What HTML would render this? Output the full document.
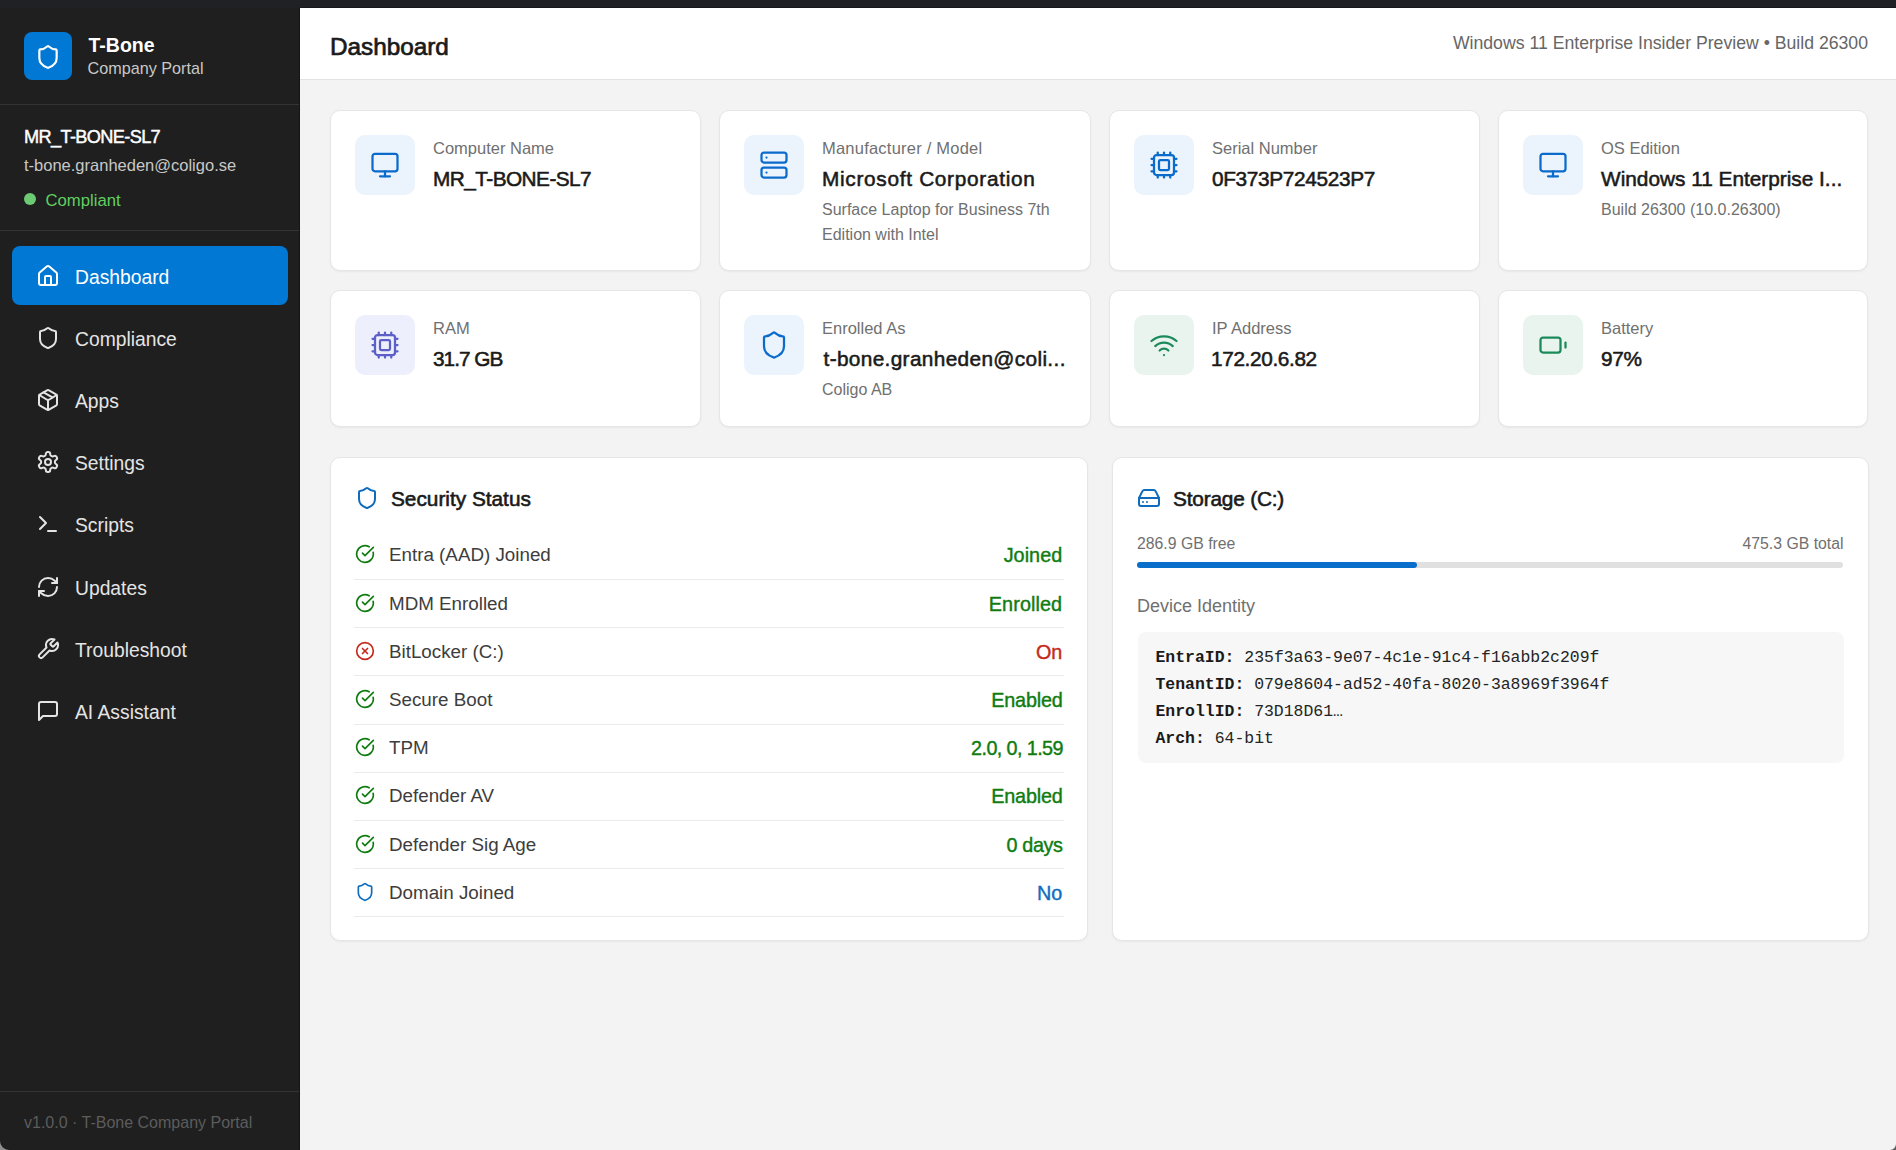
<!DOCTYPE html>
<html><head><meta charset="utf-8">
<style>
*{box-sizing:border-box;margin:0;padding:0}
html,body{width:1896px;height:1150px;overflow:hidden;background:#f3f3f3;font-family:"Liberation Sans",sans-serif}
.abs{position:absolute}
svg{display:block;fill:none;stroke:currentColor;stroke-linecap:round;stroke-linejoin:round}
#topbar{left:0;top:0;width:1896px;height:8px;background:#202124}
#side{left:0;top:8px;width:300px;height:1142px;background:#1f1f1f;border-right:1px solid #151515}
.div{position:absolute;left:0;width:299px;height:1px;background:#343434}
.logo{left:24px;top:24px;width:48px;height:48px;border-radius:8px;background:#0078d4}
.t1{color:#fff;-webkit-text-stroke-width:0.45px;white-space:nowrap}
.t2{color:#c8c8c8;white-space:nowrap}
.nav{position:absolute;left:12px;width:276px;height:59px;border-radius:8px;color:#e4e4e4}
.nav.act{background:#0078d4;color:#fff}
.nav svg{position:absolute;left:24px;top:17.5px;width:24px;height:24px;stroke-width:2}
.nav span{position:absolute;left:63px;top:1.6px;line-height:59px;font-size:19.3px;white-space:nowrap}
#main{left:300px;top:8px;width:1596px;height:1142px}
#hdr{left:0;top:0;width:1596px;height:72px;background:#fff;border-bottom:1px solid #e3e3e3}
.card{position:absolute;background:#fff;border:1px solid #e6e6e6;border-radius:10px;box-shadow:0 1px 2px rgba(0,0,0,0.05)}
.ib{position:absolute;left:24px;top:24px;width:60px;height:60px;border-radius:10px}
.ib svg{position:absolute;left:15px;top:15px;width:30px;height:30px;stroke-width:1.8}
.blue{background:#ebf3fc;color:#0b6bcb}
.purp{background:#eeeffc;color:#5b5fc7}
.grn{background:#e9f4ef;color:#1b8a5a}
.lbl{position:absolute;left:102px;color:#707070;white-space:nowrap;font-size:16.5px;line-height:24px}
.val{position:absolute;left:102px;color:#1a1a1a;-webkit-text-stroke-width:0.55px;white-space:nowrap;font-size:20.8px;line-height:24px}
.sub{position:absolute;left:102px;color:#707070;font-size:16px;line-height:25px;white-space:nowrap}
.ptitle{position:absolute;font-size:20.8px;line-height:24px;-webkit-text-stroke-width:0.6px;color:#1a1a1a;white-space:nowrap}
.rlab{position:absolute;font-size:18.8px;line-height:24px;color:#3d3d3d;white-space:nowrap}
.rval{position:absolute;font-size:19.8px;line-height:24px;-webkit-text-stroke-width:0.4px;white-space:nowrap}
.rval.g{color:#107c10}.rval.r{color:#c42b1c}.rval.b{color:#0f6cbd}
.sm{position:absolute;font-size:15.8px;line-height:24px;color:#707070;white-space:nowrap}
.di{position:absolute;font-size:18px;line-height:24px;color:#707070;white-space:nowrap}
.code{background:#f7f7f7;border-radius:8px}
.cl{position:absolute;left:18px;font-family:"Liberation Mono",monospace;font-size:16.45px;line-height:27px;color:#242424;white-space:nowrap}
.cl b{font-weight:bold;color:#1a1a1a}
</style></head><body>
<div id="topbar" class="abs"></div>
<div id="side" class="abs">
  <div class="logo abs">
    <svg class="abs" style="left:11px;top:11.5px;width:26px;height:26px;color:#fff;stroke-width:2" viewBox="0 0 24 24"><path d="M20 13c0 5-3.5 7.5-7.66 8.95a1 1 0 0 1-.67-.01C7.5 20.5 4 18 4 13V6a1 1 0 0 1 1-1c2 0 4.5-1.2 6.24-2.72a1.17 1.17 0 0 1 1.52 0C14.51 3.81 17 5 19 5a1 1 0 0 1 1 1z"/></svg>
  </div>
  <div class="abs t1" style="left:88.5px;top:23px;font-size:19.5px;line-height:28px;font-weight:bold;-webkit-text-stroke-width:0">T-Bone</div>
  <div class="abs t2" style="left:87.5px;top:48.3px;font-size:16.2px;line-height:24px">Company Portal</div>
  <div class="div" style="top:96px"></div>
  <div class="abs t1" style="left:24px;top:117px;font-size:18.2px;line-height:24px;letter-spacing:-0.65px">MR_T-BONE-SL7</div>
  <div class="abs t2" style="left:24px;top:144.5px;font-size:16.5px;line-height:24px">t-bone.granheden@coligo.se</div>
  <div class="abs" style="left:24px;top:185px;width:12px;height:12px;border-radius:6px;background:#6ccb72"></div>
  <div class="abs" style="left:45.5px;top:181px;font-size:16.7px;line-height:24px;color:#5fcf5f">Compliant</div>
  <div class="div" style="top:222px"></div>

  <div class="nav act" style="top:238px"><svg viewBox="0 0 24 24"><path d="M15 21v-8a1 1 0 0 0-1-1h-4a1 1 0 0 0-1 1v8"/><path d="M3 10a2 2 0 0 1 .709-1.528l7-5.999a2 2 0 0 1 2.582 0l7 5.999A2 2 0 0 1 21 10v9a2 2 0 0 1-2 2H5a2 2 0 0 1-2-2z"/></svg><span>Dashboard</span></div>
  <div class="nav" style="top:300.2px"><svg viewBox="0 0 24 24"><path d="M20 13c0 5-3.5 7.5-7.66 8.950a1 1 0 0 1-.67-.01C7.5 20.5 4 18 4 13V6a1 1 0 0 1 1-1c2 0 4.5-1.2 6.24-2.72a1.17 1.17 0 0 1 1.52 0C14.51 3.81 17 5 19 5a1 1 0 0 1 1 1z"/></svg><span>Compliance</span></div>
  <div class="nav" style="top:362.4px"><svg viewBox="0 0 24 24"><path d="M11 21.73a2 2 0 0 0 2 0l7-4A2 2 0 0 0 21 16V8a2 2 0 0 0-1-1.730l-7-4a2 2 0 0 0-2 0l-7 4A2 2 0 0 0 3 8v8a2 2 0 0 0 1 1.73z"/><path d="M12 22V12"/><path d="m3.3 7 7.703 4.734a2 2 0 0 0 1.994 0L20.7 7"/><path d="m7.5 4.27 9 5.15"/></svg><span>Apps</span></div>
  <div class="nav" style="top:424.6px"><svg viewBox="0 0 24 24"><path d="M12.22 2h-.44a2 2 0 0 0-2 2v.18a2 2 0 0 1-1 1.73l-.43.25a2 2 0 0 1-2 0l-.15-.08a2 2 0 0 0-2.73.73l-.22.38a2 2 0 0 0 .73 2.730l.15.1a2 2 0 0 1 1 1.72v.51a2 2 0 0 1-1 1.74l-.15.09a2 2 0 0 0-.73 2.73l.22.38a2 2 0 0 0 2.73.73l.15-.08a2 2 0 0 1 2 0l.43.25a2 2 0 0 1 1 1.73V20a2 2 0 0 0 2 2h.44a2 2 0 0 0 2-2v-.18a2 2 0 0 1 1-1.73l.43-.25a2 2 0 0 1 2 0l.15.08a2 2 0 0 0 2.73-.73l.22-.39a2 2 0 0 0-.73-2.73l-.15-.08a2 2 0 0 1-1-1.74v-.5a2 2 0 0 1 1-1.74l.15-.09a2 2 0 0 0 .73-2.73l-.22-.38a2 2 0 0 0-2.73-.73l-.15.08a2 2 0 0 1-2 0l-.43-.25a2 2 0 0 1-1-1.73V4a2 2 0 0 0-2-2z"/><circle cx="12" cy="12" r="3"/></svg><span>Settings</span></div>
  <div class="nav" style="top:486.8px"><svg viewBox="0 0 24 24"><polyline points="4 17 10 11 4 5"/><line x1="12" x2="20" y1="19" y2="19"/></svg><span>Scripts</span></div>
  <div class="nav" style="top:549.0px"><svg viewBox="0 0 24 24"><path d="M3 12a9 9 0 0 1 9-9 9.75 9.75 0 0 1 6.74 2.74L21 8"/><path d="M21 3v5h-5"/><path d="M21 12a9 9 0 0 1-9 9 9.75 9.75 0 0 1-6.74-2.74L3 16"/><path d="M8 16H3v5"/></svg><span>Updates</span></div>
  <div class="nav" style="top:611.2px"><svg viewBox="0 0 24 24"><path d="M14.7 6.3a1 1 0 0 0 0 1.4l1.6 1.6a1 1 0 0 0 1.4 0l3.77-3.77a6 6 0 0 1-7.94 7.94l-6.91 6.91a2.12 2.12 0 0 1-3-3l6.91-6.91a6 6 0 0 1 7.940-7.94l-3.76 3.76z"/></svg><span>Troubleshoot</span></div>
  <div class="nav" style="top:673.4px"><svg viewBox="0 0 24 24"><path d="M21 15a2 2 0 0 1-2 2H7l-4 4V5a2 2 0 0 1 2-2h14a2 2 0 0 1 2 2z"/></svg><span>AI Assistant</span></div>

  <div class="div" style="top:1083px"></div>
  <div class="abs" style="left:24px;top:1103.3px;font-size:16px;line-height:24px;color:#5c5c5c;white-space:nowrap">v1.0.0 · T-Bone Company Portal</div>
</div>

<div id="main" class="abs">
  <div id="hdr" class="abs">
    <div class="abs" style="left:30px;top:20.5px;font-size:24.3px;line-height:36px;color:#1a1a1a;-webkit-text-stroke-width:0.7px">Dashboard</div>
    <div class="abs" style="right:28px;top:23px;font-size:17.66px;line-height:24px;color:#666;white-space:nowrap">Windows 11 Enterprise Insider Preview • Build 26300</div>
  </div>
</div>
<!--CARDS-->
<div class="card" style="left:330px;top:110px;width:371px;height:161px"><div class="ib blue"><svg viewBox="0 0 24 24"><rect width="20" height="14" x="2" y="3" rx="2"/><line x1="8" x2="16" y1="21" y2="21"/><line x1="12" x2="12" y1="17" y2="21"/></svg></div><div class="lbl" style="top:24.5px;letter-spacing:0px">Computer Name</div><div class="val" style="top:56px;left:102px;letter-spacing:-0.55px">MR_T-BONE-SL7</div></div>
<div class="card" style="left:719px;top:110px;width:372px;height:161px"><div class="ib blue"><svg viewBox="0 0 24 24"><rect width="20" height="8" x="2" y="2" rx="2" ry="2"/><rect width="20" height="8" x="2" y="14" rx="2" ry="2"/><line x1="6" x2="6.01" y1="6" y2="6"/><line x1="6" x2="6.01" y1="18" y2="18"/></svg></div><div class="lbl" style="top:24.5px;letter-spacing:0.22px">Manufacturer / Model</div><div class="val" style="top:56px;left:102px;letter-spacing:0.7px">Microsoft Corporation</div><div class="sub" style="top:86px">Surface Laptop for Business 7th<br>Edition with Intel</div></div>
<div class="card" style="left:1109px;top:110px;width:371px;height:161px"><div class="ib blue"><svg viewBox="0 0 24 24"><path d="M12 20v2"/><path d="M12 2v2"/><path d="M17 20v2"/><path d="M17 2v2"/><path d="M2 12h2"/><path d="M2 17h2"/><path d="M2 7h2"/><path d="M20 12h2"/><path d="M20 17h2"/><path d="M20 7h2"/><path d="M7 20v2"/><path d="M7 2v2"/><rect x="4" y="4" width="16" height="16" rx="2"/><rect x="8" y="8" width="8" height="8" rx="1"/></svg></div><div class="lbl" style="top:24.5px;letter-spacing:0px">Serial Number</div><div class="val" style="top:56px;left:102px;letter-spacing:-0.34px">0F373P724523P7</div></div>
<div class="card" style="left:1498px;top:110px;width:370px;height:161px"><div class="ib blue"><svg viewBox="0 0 24 24"><rect width="20" height="14" x="2" y="3" rx="2"/><line x1="8" x2="16" y1="21" y2="21"/><line x1="12" x2="12" y1="17" y2="21"/></svg></div><div class="lbl" style="top:24.5px;letter-spacing:0px">OS Edition</div><div class="val" style="top:56px;left:102px;letter-spacing:0px">Windows 11 Enterprise I...</div><div class="sub" style="top:86px">Build 26300 (10.0.26300)</div></div>
<div class="card" style="left:330px;top:290px;width:371px;height:137px"><div class="ib purp"><svg viewBox="0 0 24 24"><path d="M12 20v2"/><path d="M12 2v2"/><path d="M17 20v2"/><path d="M17 2v2"/><path d="M2 12h2"/><path d="M2 17h2"/><path d="M2 7h2"/><path d="M20 12h2"/><path d="M20 17h2"/><path d="M20 7h2"/><path d="M7 20v2"/><path d="M7 2v2"/><rect x="4" y="4" width="16" height="16" rx="2"/><rect x="8" y="8" width="8" height="8" rx="1"/></svg></div><div class="lbl" style="top:24.5px;letter-spacing:0px">RAM</div><div class="val" style="top:56px;left:102px;letter-spacing:-1.0px">31.7 GB</div></div>
<div class="card" style="left:719px;top:290px;width:372px;height:137px"><div class="ib blue"><svg viewBox="0 0 24 24"><path d="M20 13c0 5-3.5 7.5-7.66 8.95a1 1 0 0 1-.67-.01C7.5 20.5 4 18 4 13V6a1 1 0 0 1 1-1c2 0 4.5-1.2 6.24-2.72a1.17 1.17 0 0 1 1.52 0C14.51 3.81 17 5 19 5a1 1 0 0 1 1 1z"/></svg></div><div class="lbl" style="top:24.5px;letter-spacing:0px">Enrolled As</div><div class="val" style="top:56px;left:103.5px;letter-spacing:0.35px">t-bone.granheden@coli...</div><div class="sub" style="top:86px">Coligo AB</div></div>
<div class="card" style="left:1109px;top:290px;width:371px;height:137px"><div class="ib grn"><svg viewBox="0 0 24 24"><path d="M12 20h.01"/><path d="M2 8.82a15 15 0 0 1 20 0"/><path d="M5 12.859a10 10 0 0 1 14 0"/><path d="M8.5 16.429a5 5 0 0 1 7 0"/></svg></div><div class="lbl" style="top:24.5px;letter-spacing:0px">IP Address</div><div class="val" style="top:56px;left:101px;letter-spacing:-0.37px">172.20.6.82</div></div>
<div class="card" style="left:1498px;top:290px;width:370px;height:137px"><div class="ib grn"><svg viewBox="0 0 24 24"><rect width="16" height="12" x="2" y="6" rx="2"/><path d="M22 14v-4"/></svg></div><div class="lbl" style="top:24.5px;letter-spacing:0px">Battery</div><div class="val" style="top:56px;left:102px;letter-spacing:-0.3px">97%</div></div>
<!--/CARDS-->
<!--PANELS-->
<div class="card" style="left:330px;top:457px;width:758px;height:484px"><svg class="abs" style="left:24px;top:28px;width:24px;height:24px;color:#0f6cbd;stroke-width:2" viewBox="0 0 24 24"><path d="M20 13c0 5-3.5 7.5-7.66 8.95a1 1 0 0 1-.67-.01C7.5 20.5 4 18 4 13V6a1 1 0 0 1 1-1c2 0 4.5-1.2 6.24-2.72a1.17 1.17 0 0 1 1.52 0C14.51 3.81 17 5 19 5a1 1 0 0 1 1 1z"/></svg><div class="ptitle" style="left:60px;top:29px">Security Status</div><svg class="abs" style="left:23.8px;top:86.4px;width:20px;height:20px;color:#107c10;stroke-width:2" viewBox="0 0 24 24"><path d="M21.801 10A10 10 0 1 1 17 3.335"/><path d="m9 11 3 3L22 4"/></svg><div class="rlab" style="left:58px;top:85.4px">Entra (AAD) Joined</div><div class="rval g" style="right:24.75px;top:85.4px;letter-spacing:0.05px">Joined</div><div class="abs" style="left:23px;top:121px;width:710px;height:1px;background:#ebebeb"></div><svg class="abs" style="left:23.8px;top:134.6px;width:20px;height:20px;color:#107c10;stroke-width:2" viewBox="0 0 24 24"><path d="M21.801 10A10 10 0 1 1 17 3.335"/><path d="m9 11 3 3L22 4"/></svg><div class="rlab" style="left:58px;top:133.6px">MDM Enrolled</div><div class="rval g" style="right:24.8px;top:133.6px;letter-spacing:0.1px">Enrolled</div><div class="abs" style="left:23px;top:169.2px;width:710px;height:1px;background:#ebebeb"></div><svg class="abs" style="left:23.8px;top:182.8px;width:20px;height:20px;color:#c42b1c;stroke-width:2" viewBox="0 0 24 24"><circle cx="12" cy="12" r="10"/><path d="m15 9-6 6"/><path d="m9 9 6 6"/></svg><div class="rlab" style="left:58px;top:181.8px">BitLocker (C:)</div><div class="rval r" style="right:24.7px;top:181.8px;letter-spacing:0px">On</div><div class="abs" style="left:23px;top:217.4px;width:710px;height:1px;background:#ebebeb"></div><svg class="abs" style="left:23.8px;top:231px;width:20px;height:20px;color:#107c10;stroke-width:2" viewBox="0 0 24 24"><path d="M21.801 10A10 10 0 1 1 17 3.335"/><path d="m9 11 3 3L22 4"/></svg><div class="rlab" style="left:58px;top:230px">Secure Boot</div><div class="rval g" style="right:24.5px;top:230px;letter-spacing:-0.2px">Enabled</div><div class="abs" style="left:23px;top:265.6px;width:710px;height:1px;background:#ebebeb"></div><svg class="abs" style="left:23.8px;top:279.2px;width:20px;height:20px;color:#107c10;stroke-width:2" viewBox="0 0 24 24"><path d="M21.801 10A10 10 0 1 1 17 3.335"/><path d="m9 11 3 3L22 4"/></svg><div class="rlab" style="left:58px;top:278.2px">TPM</div><div class="rval g" style="right:24.1px;top:278.2px;letter-spacing:-0.6px">2.0, 0, 1.59</div><div class="abs" style="left:23px;top:313.8px;width:710px;height:1px;background:#ebebeb"></div><svg class="abs" style="left:23.8px;top:327.4px;width:20px;height:20px;color:#107c10;stroke-width:2" viewBox="0 0 24 24"><path d="M21.801 10A10 10 0 1 1 17 3.335"/><path d="m9 11 3 3L22 4"/></svg><div class="rlab" style="left:58px;top:326.4px">Defender AV</div><div class="rval g" style="right:24.5px;top:326.4px;letter-spacing:-0.2px">Enabled</div><div class="abs" style="left:23px;top:362px;width:710px;height:1px;background:#ebebeb"></div><svg class="abs" style="left:23.8px;top:375.6px;width:20px;height:20px;color:#107c10;stroke-width:2" viewBox="0 0 24 24"><path d="M21.801 10A10 10 0 1 1 17 3.335"/><path d="m9 11 3 3L22 4"/></svg><div class="rlab" style="left:58px;top:374.6px">Defender Sig Age</div><div class="rval g" style="right:24.35px;top:374.6px;letter-spacing:-0.35px">0 days</div><div class="abs" style="left:23px;top:410.2px;width:710px;height:1px;background:#ebebeb"></div><svg class="abs" style="left:23.8px;top:423.8px;width:20px;height:20px;color:#0f6cbd;stroke-width:2" viewBox="0 0 24 24"><path d="M20 13c0 5-3.5 7.5-7.66 8.95a1 1 0 0 1-.67-.01C7.5 20.5 4 18 4 13V6a1 1 0 0 1 1-1c2 0 4.5-1.2 6.24-2.72a1.17 1.17 0 0 1 1.52 0C14.51 3.81 17 5 19 5a1 1 0 0 1 1 1z"/></svg><div class="rlab" style="left:58px;top:422.8px">Domain Joined</div><div class="rval b" style="right:24.7px;top:422.8px;letter-spacing:0px">No</div><div class="abs" style="left:23px;top:458.4px;width:710px;height:1px;background:#ebebeb"></div></div>
<div class="card" style="left:1112px;top:457px;width:757px;height:484px"><svg class="abs" style="left:24px;top:28px;width:24px;height:24px;color:#0f6cbd;stroke-width:2" viewBox="0 0 24 24"><line x1="22" x2="2" y1="12" y2="12"/><path d="M5.45 5.11 2 12v6a2 2 0 0 0 2 2h16a2 2 0 0 0 2-2v-6l-3.45-6.89A2 2 0 0 0 16.76 4H7.24a2 2 0 0 0-1.79 1.11z"/><line x1="6" x2="6.01" y1="16" y2="16"/><line x1="10" x2="10.01" y1="16" y2="16"/></svg><div class="ptitle" style="left:60px;top:29px;letter-spacing:-0.18px">Storage (C:)</div><div class="sm" style="left:24px;top:73.7px">286.9 GB free</div><div class="sm" style="right:24.5px;top:73.7px">475.3 GB total</div><div class="abs" style="left:24px;top:104px;width:706px;height:6px;border-radius:3px;background:#e0e0e0"><div style="width:280px;height:6px;border-radius:3px;background:#0a6fca"></div></div><div class="di" style="left:24px;top:135.8px">Device Identity</div><div class="abs code" style="left:24.5px;top:173.5px;width:706px;height:131px"><div class="cl" style="top:12.2px"><b>EntraID:</b> 235f3a63-9e07-4c1e-91c4-f16abb2c209f</div><div class="cl" style="top:39.25px"><b>TenantID:</b> 079e8604-ad52-40fa-8020-3a8969f3964f</div><div class="cl" style="top:66.3px"><b>EnrollID:</b> 73D18D61…</div><div class="cl" style="top:93.35px"><b>Arch:</b> 64-bit</div></div></div>
<!--/PANELS-->
<div class="abs" style="left:300px;top:7px;width:1596px;height:1px;background:#17181a"></div>
<svg class="abs" style="left:0;top:0;width:1896px;height:1150px;pointer-events:none;stroke:none" viewBox="0 0 1896 1150"><path d="M0 1141 A9 9 0 0 0 9 1150 L0 1150 Z" fill="#8e8e8e"/><path d="M1896 1144 A6 6 0 0 1 1890 1150 L1896 1150 Z" fill="#5a5a5a"/></svg>
</body></html>
